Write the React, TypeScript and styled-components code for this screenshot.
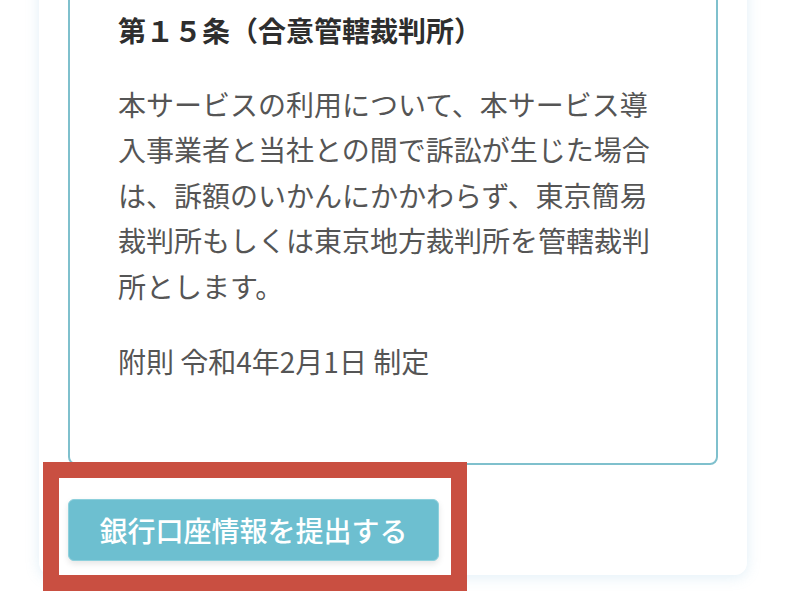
import React from "react";
import styled, { createGlobalStyle } from "styled-components";

const GlobalStyle = createGlobalStyle`
  html, body {
    margin: 0;
    padding: 0;
    background: #ffffff;
    overflow: hidden;
  }
  body {
    font-family: "Noto Sans CJK JP", "Noto Sans", sans-serif;
  }
  * { box-sizing: border-box; }
`;

const Page = styled.div`
  width: 786px;
  height: 613px;
  padding: 0 39px;
  overflow: hidden;
`;

const Card = styled.section`
  margin-top: -72px;
  background: #ffffff;
  border-radius: 12px;
  box-shadow: 0 2px 14px rgba(120, 180, 220, 0.22);
  padding: 30px 29px 14px 29px;
`;

const TermsBox = styled.div`
  border: 2px solid #7fc0cd;
  border-radius: 8px;
  padding: 48px 48px 48px 48px;
`;

const ArticleTitle = styled.h3`
  margin: 0 0 28px 0;
  font-size: 28px;
  line-height: 45.5px;
  font-weight: 700;
  color: #2e2e2e;
`;

const Paragraph = styled.p`
  margin: 0 0 30px 0;
  font-size: 28px;
  line-height: 45.5px;
  font-weight: 400;
  color: #555555;
`;

const ButtonArea = styled.div`
  margin-top: 34px;
  display: flex;
`;

const ButtonWrap = styled.div`
  position: relative;
  display: inline-flex;
`;

const SubmitButton = styled.button`
  width: 371px;
  height: 62px;
  border: 1px solid #8dd0dc;
  border-radius: 6px;
  background: #6dbfd0;
  color: #ffffff;
  font-family: "Noto Sans CJK JP", "Noto Sans", sans-serif;
  font-size: 28px;
  font-weight: 500;
  line-height: 1;
  padding: 0;
  box-shadow: 0 3px 6px rgba(0, 0, 0, 0.1);
  cursor: pointer;
`;

const Highlight = styled.div`
  position: absolute;
  left: -25px;
  top: -37px;
  right: -28px;
  bottom: -30px;
  border: 16px solid #c94f41;
  pointer-events: none;
`;

export default function App() {
  return (
    <>
      <GlobalStyle />
      <Page>
        <Card>
          <TermsBox>
            <ArticleTitle>第１５条（合意管轄裁判所）</ArticleTitle>
            <Paragraph>
              本サービスの利用について、本サービス導入事業者と当社との間で訴訟が生じた場合は、訴額のいかんにかかわらず、東京簡易裁判所もしくは東京地方裁判所を管轄裁判所とします。
            </Paragraph>
            <Paragraph>附則 令和4年2月1日 制定</Paragraph>
          </TermsBox>
          <ButtonArea>
            <ButtonWrap>
              <SubmitButton type="button">銀行口座情報を提出する</SubmitButton>
              <Highlight />
            </ButtonWrap>
          </ButtonArea>
        </Card>
      </Page>
    </>
  );
}
